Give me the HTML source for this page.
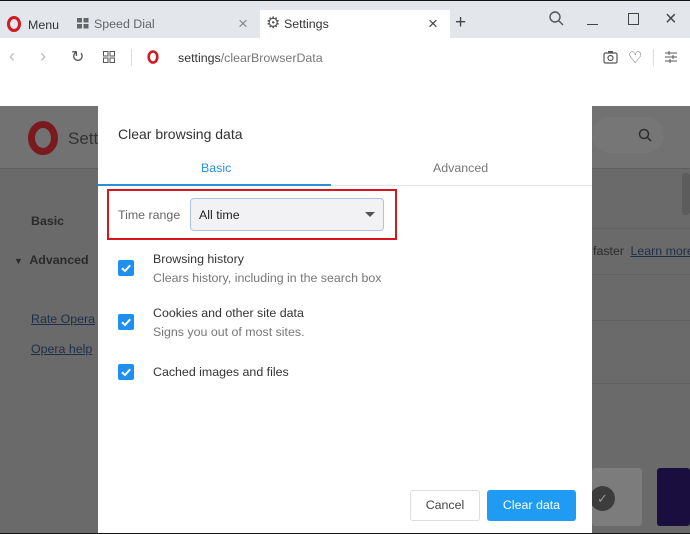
<!DOCTYPE html>
<html><head><meta charset="utf-8"><style>
*{margin:0;padding:0;box-sizing:border-box}
body{width:690px;height:534px;overflow:hidden;font-family:"Liberation Sans",sans-serif;background:#fff;position:relative}
.a{position:absolute}
.t{font-size:12.4px;color:#333;white-space:nowrap}
</style></head><body>
<div class="a" style="left:0;top:0;width:690px;height:38px;background:#e3e7ec"></div>
<div class="a" style="left:0;top:0;width:690px;height:1px;background:#111"></div>
<svg class="a" style="left:7px;top:16px" width="14" height="16"><ellipse cx="7" cy="8" rx="5.5" ry="6.5" fill="none" stroke="#d01b25" stroke-width="3"/></svg>
<div class="a t" style="left:28px;top:18px">Menu</div>
<svg class="a" style="left:77px;top:18px" width="12" height="11"><rect x="0" y="0" width="5" height="4.5" fill="#666"/><rect x="6.5" y="0" width="5" height="4.5" fill="#666"/><rect x="0" y="6" width="5" height="4.5" fill="#666"/><rect x="6.5" y="6" width="5" height="4.5" fill="#666"/></svg>
<div class="a t" style="left:94px;top:17px;color:#666">Speed Dial</div>
<div class="a t" style="left:238px;top:14px;font-size:17px;color:#888">×</div>
<div class="a" style="left:260px;top:10px;width:190px;height:28px;background:#fff"></div>
<div class="a t" style="left:266px;top:13px;font-size:16px;color:#555">⚙</div>
<div class="a t" style="left:284px;top:17px">Settings</div>
<div class="a t" style="left:428px;top:14px;font-size:17px;color:#444">×</div>
<div class="a t" style="left:455px;top:12px;font-size:19px;color:#444">+</div>
<svg class="a" style="left:548px;top:10px" width="18" height="18"><circle cx="7" cy="7" r="5" fill="none" stroke="#555" stroke-width="1.4"/><line x1="11" y1="11" x2="15" y2="15" stroke="#555" stroke-width="1.4"/></svg>
<div class="a" style="left:587px;top:24px;width:11px;height:1px;background:#444"></div>
<div class="a" style="left:628px;top:13px;width:11px;height:12px;border:1px solid #444"></div>
<div class="a t" style="left:665px;top:8px;font-size:20px;color:#444">×</div>
<div class="a t" style="left:9px;top:46px;font-size:18px;color:#bbb">‹</div>
<div class="a t" style="left:40px;top:46px;font-size:18px;color:#bbb">›</div>
<div class="a t" style="left:71px;top:47px;font-size:16px;color:#555">↻</div>
<svg class="a" style="left:103px;top:51px" width="12" height="12"><rect x="0.5" y="0.5" width="4.5" height="4.5" fill="none" stroke="#555"/><rect x="7" y="0.5" width="4.5" height="4.5" fill="none" stroke="#555"/><rect x="0.5" y="7" width="4.5" height="4.5" fill="none" stroke="#555"/><rect x="7" y="7" width="4.5" height="4.5" fill="none" stroke="#555"/></svg>
<div class="a" style="left:131px;top:49px;width:1px;height:17px;background:#ddd"></div>
<svg class="a" style="left:147px;top:50px" width="12" height="14"><ellipse cx="6" cy="7" rx="4.3" ry="5.5" fill="none" stroke="#d01b25" stroke-width="2.6"/></svg>
<div class="a t" style="left:178px;top:51px;color:#333">settings<span style="color:#777">/clearBrowserData</span></div>
<svg class="a" style="left:603px;top:50px" width="15" height="14"><rect x="1" y="3" width="13" height="10" rx="1.5" fill="none" stroke="#555" stroke-width="1.2"/><circle cx="7.5" cy="8" r="2.5" fill="none" stroke="#555" stroke-width="1.2"/><rect x="5" y="1" width="5" height="2" fill="#555"/></svg>
<div class="a t" style="left:628px;top:48px;font-size:16px;color:#555">♡</div>
<div class="a" style="left:653px;top:49px;width:1px;height:17px;background:#ddd"></div>
<svg class="a" style="left:665px;top:51px" width="12" height="12"><line x1="0" y1="2" x2="12" y2="2" stroke="#555"/><line x1="0" y1="6" x2="12" y2="6" stroke="#555"/><line x1="0" y1="10" x2="12" y2="10" stroke="#555"/><line x1="4" y1="0" x2="4" y2="4" stroke="#555"/><line x1="8" y1="4" x2="8" y2="8" stroke="#555"/><line x1="5" y1="8" x2="5" y2="12" stroke="#555"/></svg>
<div class="a" style="left:0;top:106px;width:690px;height:428px;background:#6a6a6a"></div>
<div class="a" style="left:0;top:106px;width:690px;height:62px;background:#727272"></div>
<div class="a" style="left:0;top:168px;width:690px;height:1px;background:#5e5e5e"></div>
<svg class="a" style="left:27px;top:121px" width="32" height="34"><ellipse cx="16" cy="17" rx="11.5" ry="13.5" fill="none" stroke="#7a1a1e" stroke-width="7"/></svg>
<div class="a t" style="left:68px;top:129px;font-size:17px;color:#333">Sett</div>
<div class="a t" style="left:31px;top:214px;font-weight:bold;color:#2a2a2a">Basic</div>
<div class="a t" style="left:14px;top:253px;font-weight:bold;color:#2a2a2a"><span style="font-size:9px">▼</span>&nbsp; Advanced</div>
<div class="a t" style="left:31px;top:312px;color:#1f2f4a;text-decoration:underline">Rate Opera</div>
<div class="a t" style="left:31px;top:342px;color:#1f2f4a;text-decoration:underline">Opera help</div>
<div class="a" style="left:592px;top:117px;width:72px;height:36px;border-radius:18px;background:#767676"></div>
<svg class="a" style="left:638px;top:128px" width="15" height="15"><circle cx="6" cy="6" r="4.5" fill="none" stroke="#2e2e2e" stroke-width="1.5"/><line x1="9.5" y1="9.5" x2="13" y2="13" stroke="#2e2e2e" stroke-width="1.5"/></svg>
<div class="a" style="left:682px;top:173px;width:8px;height:42px;background:#5c5c5c;border-radius:3px"></div>
<div class="a" style="left:592px;top:228px;width:98px;height:1px;background:#626262"></div>
<div class="a t" style="left:593px;top:244px;color:#2a2a2a">faster <span style="color:#1f2f4a;text-decoration:underline;margin-left:3px">Learn more</span></div>
<div class="a" style="left:592px;top:274px;width:98px;height:1px;background:#626262"></div>
<div class="a" style="left:592px;top:320px;width:98px;height:1px;background:#626262"></div>
<div class="a" style="left:592px;top:383px;width:98px;height:1px;background:#626262"></div>
<div class="a" style="left:592px;top:468px;width:50px;height:58px;background:#7c7c7c;border-radius:3px"></div>
<div class="a" style="left:590px;top:486px;width:25px;height:25px;border-radius:50%;background:#3c3c3c;color:#999;font-size:13px;text-align:center;line-height:25px">✓</div>
<div class="a" style="left:657px;top:468px;width:33px;height:58px;background:#1a0e3e;border-radius:3px"></div>
<div class="a" style="left:98px;top:106px;width:494px;height:428px;background:#fff"></div>
<div class="a t" style="left:118px;top:126px;font-size:14px;color:#333">Clear browsing data</div>
<div class="a t" style="left:201px;top:161px;color:#2b8fd8">Basic</div>
<div class="a t" style="left:433px;top:161px;color:#777">Advanced</div>
<div class="a" style="left:98px;top:185px;width:494px;height:1px;background:#e6e6e6"></div>
<div class="a" style="left:98px;top:184px;width:233px;height:2px;background:#2b8fd8"></div>
<div class="a" style="left:107px;top:189px;width:290px;height:51px;border:2px solid #d9141c"></div>
<div class="a t" style="left:118px;top:208px;color:#666">Time range</div>
<div class="a" style="left:190px;top:198px;width:194px;height:33px;border:1px solid #a9c5e6;border-radius:4px;background:#f2f2f4"></div>
<div class="a t" style="left:199px;top:208px;color:#222">All time</div>
<div class="a" style="left:365px;top:212px;width:0;height:0;border-left:5px solid transparent;border-right:5px solid transparent;border-top:5px solid #555"></div>
<svg class="a" style="left:118px;top:260px" width="16" height="16"><rect width="16" height="16" rx="2" fill="#1f8ff0"/><path d="M4 8.3 L7 11 L12.2 5.3" fill="none" stroke="#fff" stroke-width="2"/></svg>
<div class="a t" style="left:153px;top:252px">Browsing history</div>
<div class="a t" style="left:153px;top:271px;color:#777">Clears history, including in the search box</div>
<svg class="a" style="left:118px;top:314px" width="16" height="16"><rect width="16" height="16" rx="2" fill="#1f8ff0"/><path d="M4 8.3 L7 11 L12.2 5.3" fill="none" stroke="#fff" stroke-width="2"/></svg>
<div class="a t" style="left:153px;top:306px">Cookies and other site data</div>
<div class="a t" style="left:153px;top:325px;color:#777">Signs you out of most sites.</div>
<svg class="a" style="left:118px;top:364px" width="16" height="16"><rect width="16" height="16" rx="2" fill="#1f8ff0"/><path d="M4 8.3 L7 11 L12.2 5.3" fill="none" stroke="#fff" stroke-width="2"/></svg>
<div class="a t" style="left:153px;top:365px">Cached images and files</div>
<div class="a" style="left:410px;top:490px;width:70px;height:31px;border:1px solid #ddd;border-radius:3px;background:#fff;font-size:12.4px;color:#444;text-align:center;line-height:29px">Cancel</div>
<div class="a" style="left:487px;top:490px;width:89px;height:31px;border-radius:3px;background:#1f9bf3;font-size:12.4px;color:#fff;text-align:center;line-height:31px">Clear data</div>
<div class="a" style="left:0;top:533px;width:690px;height:1px;background:#111"></div>
</body></html>
